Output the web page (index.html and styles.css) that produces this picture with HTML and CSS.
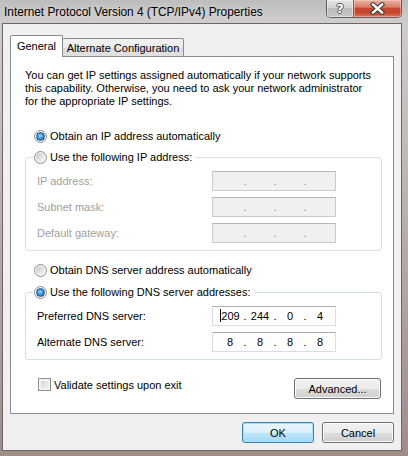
FILE: index.html
```html
<!DOCTYPE html>
<html lang="en">
<head>
<meta charset="utf-8">
<title>Internet Protocol Version 4 (TCP/IPv4) Properties</title>
<link rel="stylesheet" href="styles.css">
</head>
<body>
<div class="window">
  <div class="titlebar">
    <span class="title">Internet Protocol Version 4 (TCP/IPv4) Properties</span>
    <div class="caption">
      <div class="cap-btn help"><span>?</span></div>
      <div class="cap-btn close">
        <svg width="17" height="13" viewBox="0 0 17 13">
          <path d="M4 2.5 L13 10.5 M13 2.5 L4 10.5" stroke="#3b3b3b" stroke-width="4.6" stroke-linecap="square" fill="none"/>
          <path d="M4 2.5 L13 10.5 M13 2.5 L4 10.5" stroke="#ffffff" stroke-width="2.4" stroke-linecap="square" fill="none"/>
        </svg>
      </div>
    </div>
  </div>
  <div class="client">
    <div class="tabs">
      <div class="tab active">General</div>
      <div class="tab">Alternate Configuration</div>
    </div>
    <div class="panel">
      <p class="intro">You can get IP settings assigned automatically if your network supports<br>this capability. Otherwise, you need to ask your network administrator<br>for the appropriate IP settings.</p>

      <div class="option first"><span class="radio checked"></span><span>Obtain an IP address automatically</span></div>

      <fieldset class="group">
        <legend class="option"><span class="radio"></span><span>Use the following IP address:</span></legend>
        <div class="rows">
          <span class="label disabled">IP address:</span>
          <div class="ip disabled"><span></span><span class="dot">.</span><span></span><span class="dot">.</span><span></span><span class="dot">.</span><span></span></div>
          <span class="label disabled">Subnet mask:</span>
          <div class="ip disabled"><span></span><span class="dot">.</span><span></span><span class="dot">.</span><span></span><span class="dot">.</span><span></span></div>
          <span class="label disabled">Default gateway:</span>
          <div class="ip disabled"><span></span><span class="dot">.</span><span></span><span class="dot">.</span><span></span><span class="dot">.</span><span></span></div>
        </div>
      </fieldset>

      <div class="option dns-auto"><span class="radio"></span><span>Obtain DNS server address automatically</span></div>

      <fieldset class="group group-dns">
        <legend class="option"><span class="radio checked"></span><span>Use the following DNS server addresses:</span></legend>
        <div class="rows">
          <span class="label">Preferred DNS server:</span>
          <div class="ip"><span><i class="caret"></i>209</span><span class="dot">.</span><span>244</span><span class="dot">.</span><span>0</span><span class="dot">.</span><span>4</span></div>
          <span class="label">Alternate DNS server:</span>
          <div class="ip"><span>8</span><span class="dot">.</span><span>8</span><span class="dot">.</span><span>8</span><span class="dot">.</span><span>8</span></div>
        </div>
      </fieldset>

      <div class="panel-footer">
        <div class="check-row"><span class="checkbox"></span><span>Validate settings upon exit</span></div>
        <button class="btn advanced">Advanced...</button>
      </div>
    </div>
    <div class="dialog-buttons">
      <button class="btn default">OK</button>
      <button class="btn">Cancel</button>
    </div>
  </div>
</div>
</body>
</html>
```

FILE: styles.css
```css
* { box-sizing: border-box; }
html, body { margin: 0; padding: 0; }
body {
  width: 408px;
  height: 456px;
  overflow: hidden;
  font-family: "Liberation Sans", Arial, sans-serif;
  font-size: 11px;
  color: #000;
}
.window {
  width: 408px;
  height: 456px;
  display: flex;
  flex-direction: column;
  background:
    linear-gradient(180deg, #bdbdbd 0px, #cfcccc 22px, #b3a7a5 60%, #a08c89 100%);
}
.titlebar {
  height: 24px;
  display: flex;
  justify-content: space-between;
  align-items: flex-start;
}
.title {
  padding: 5px 0 0 4px;
  font-size: 11.85px;
  color: #000;
  text-shadow: 0 0 6px rgba(255,255,255,0.7);
}
.caption {
  display: flex;
  margin-right: 6px;
  border: 1px solid #5e5e5e;
  border-top: none;
  border-radius: 0 0 5px 5px;
  overflow: hidden;
  height: 18px;
}
.cap-btn {
  height: 17px;
  display: flex;
  align-items: center;
  justify-content: center;
}
.help {
  width: 27px;
  border-right: 1px solid #6a6a6a;
  background: linear-gradient(180deg, #e3e3e3 0%, #d3d3d3 45%, #bdbdbd 50%, #c6c6c6 100%);
  box-shadow: inset 0 0 0 1px rgba(255,255,255,0.45);
}
.help span {
  font-family: "DejaVu Sans", sans-serif;
  font-weight: bold;
  font-size: 13px;
  color: #fff;
  line-height: 1;
  text-shadow: -1px 0 #555, 1px 0 #555, 0 -1px #555, 0 1px #555;
}
.close {
  width: 47px;
  background: linear-gradient(180deg, #eab1a4 0%, #d9806c 40%, #c8482f 50%, #c5452c 75%, #dd7d5e 100%);
  box-shadow: inset 0 0 0 1px rgba(255,220,210,0.45);
}
.client {
  flex: 1;
  margin: 0 7px 6px 3px;
  background: #f0f0f0;
  box-shadow: 0 0 0 1px #6e6565;
  padding: 11px 7px 0 7px;
  display: flex;
  flex-direction: column;
}
.tabs {
  display: flex;
  align-items: flex-end;
  height: 21px;
}
.tab {
  height: 18px;
  width: 121px;
  border: 1px solid #898c95;
  border-bottom: none;
  border-left: none;
  background: linear-gradient(180deg, #f2f2f2 0%, #ebebeb 50%, #dddddd 50%, #e0e0e0 100%);
  display: flex;
  align-items: center;
  justify-content: center;
  padding-top: 1px;
  border-radius: 2px 2px 0 0;
}
.tab.active {
  position: relative;
  z-index: 1;
  width: 53px;
  height: 22px;
  margin-bottom: -1px;
  border-left: 1px solid #898c95;
  background: #fff;
  padding-top: 0;
  padding-bottom: 2px;
}
.panel {
  height: 358px;
  border: 1px solid #898c95;
  background: #fff;
  padding: 12px 11px 0 14px;
  display: flex;
  flex-direction: column;
}
.intro {
  margin: 0;
  line-height: 13px;
  white-space: nowrap;
}
.option {
  display: flex;
  align-items: center;
  gap: 3px;
  height: 16px;
}
.option.first { margin-top: 20px; padding-left: 9px; }
.option.dns-auto { margin-top: 11px; padding-left: 9px; }
.radio {
  flex: none;
  width: 13px;
  height: 13px;
  border-radius: 50%;
  border: 1px solid #8e8f8f;
  background: #f6f6f6;
  display: flex;
  align-items: center;
  justify-content: center;
}
.radio::before {
  content: "";
  width: 9px;
  height: 9px;
  border-radius: 50%;
  background: linear-gradient(135deg, #c6c6c6 0%, #e6e6e6 60%, #fafafa 100%);
}
.radio.checked::before {
  width: 7px;
  height: 7px;
  border: 1px solid #1c5380;
  background: radial-gradient(circle at 45% 40%, #9fdcff 0%, #3a9ae0 45%, #0f5a9c 100%);
}
.group {
  margin: 5px 0 0 0;
  border: 1px solid #d5dfe5;
  border-radius: 3px;
  padding: 6px 0 7px 11px;
  min-width: 0;
}
.group-dns { margin-top: 6px; }
.group legend {
  margin-left: -4px;
  padding: 0 4px 0 1px;
}
.rows {
  display: grid;
  grid-template-columns: 175px 124px;
  row-gap: 6px;
  align-items: center;
}
.label.disabled { color: #a0a0a0; }
.ip {
  height: 20px;
  border: 1px solid #dadde3;
  border-top-color: #abadb3;
  background: #fff;
  display: grid;
  grid-template-columns: 24px 6px 24px 6px 24px 6px 24px;
  padding-left: 5px;
  align-items: center;
  justify-items: center;
  line-height: 18px;
}
.ip.disabled {
  background: #f0f0f0;
  border-color: #c9cbcf;
  border-top-color: #b5b7bc;
}
.ip.disabled .dot { color: #8a8a8a; }
.caret {
  display: inline-block;
  width: 1px;
  height: 13px;
  background: #000;
  vertical-align: -2px;
}
.panel-footer {
  margin-top: 18px;
  display: flex;
  justify-content: space-between;
  align-items: flex-start;
}
.check-row {
  display: flex;
  align-items: center;
  gap: 3px;
  padding-left: 13px;
  height: 13px;
}
.checkbox {
  width: 13px;
  height: 13px;
  border: 1px solid #8e8f8f;
  background: linear-gradient(135deg, #c9cdd3 0%, #e4e6e9 55%, #f8f8f8 100%);
  box-shadow: inset 0 0 0 2px #f4f4f4;
  flex: none;
}
.btn {
  font-family: inherit;
  font-size: 11px;
  color: #000;
  height: 21px;
  border: 1px solid #707070;
  border-radius: 3px;
  background: linear-gradient(180deg, #f2f2f2 0%, #ebebeb 50%, #dddddd 51%, #cfcfcf 100%);
  box-shadow: inset 0 0 0 1px #fbfbfb;
  padding: 0;
}
.btn.advanced { width: 87px; margin-right: 1px; }
.dialog-buttons {
  display: flex;
  justify-content: flex-end;
  gap: 8px;
  margin-top: 8px;
}
.dialog-buttons .btn { width: 72px; }
.btn.default {
  border-color: #3c7fb1;
  background: linear-gradient(180deg, #eaf6fd 0%, #d9f0fc 50%, #bee6fd 51%, #a7d9f5 100%);
  box-shadow: inset 0 0 0 1px #a8e3fb;
}
```
